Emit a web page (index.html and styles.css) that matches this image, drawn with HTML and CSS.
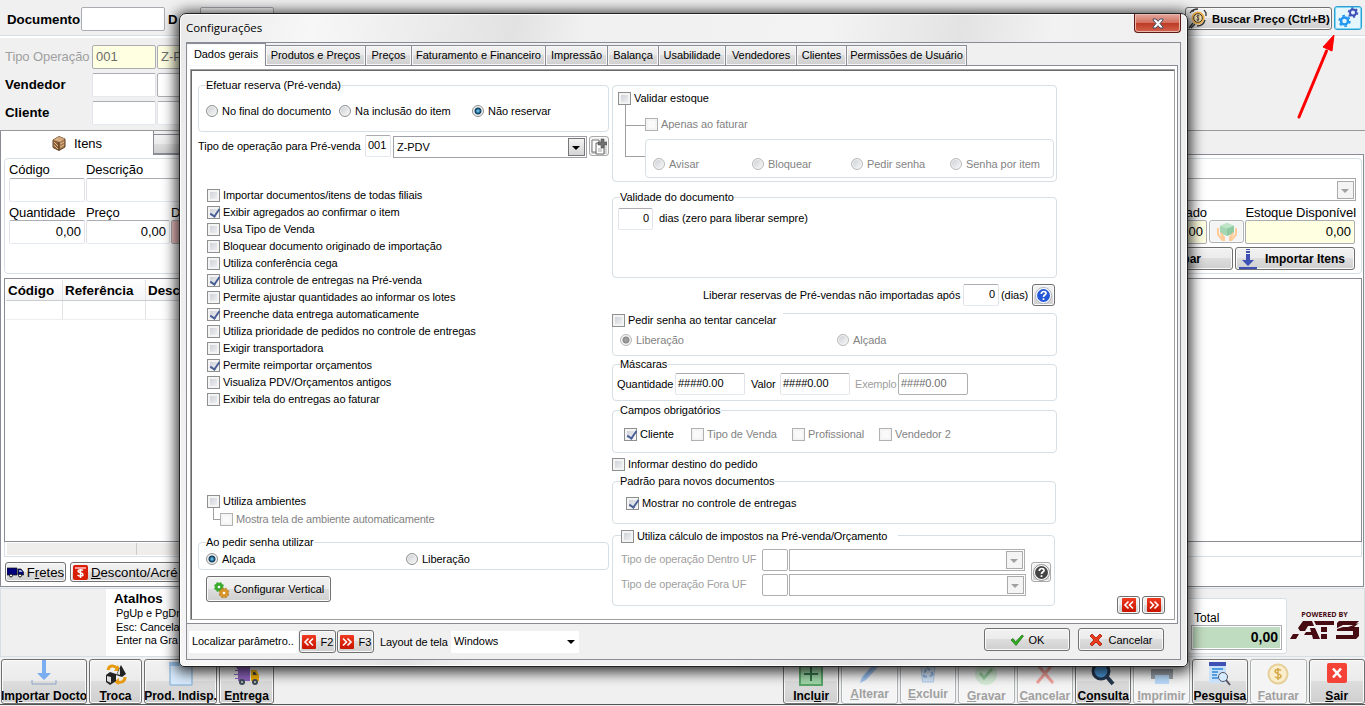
FILE: index.html
```
<!DOCTYPE html>
<html lang="pt-BR">
<head>
    <meta charset="UTF-8">
    <meta name="viewport" content="width=device-width, initial-scale=1.0">
    <title>Configurações</title>
    <link rel="stylesheet" href="styles.css">
</head>
<body>
    <header class="topbar">
        <label class="doc">Documento</label>
        <div class="box doc-num"></div>
        <label class="doc-date">D</label>
        <div class="box doc-day"></div>
        <button class="btn buscar">
            <svg width="21" height="21" viewBox="0 0 21 21" fill="none"><circle cx="11" cy="10" r="6.5" fill="#f3b54a"/><circle cx="11" cy="10" r="4.3" fill="#fbe3b0" stroke="#333"/><path d="M4 3h3M3 5c2-3 5-4 8-4M17 2l2 3v3M18 12c-1 4-4 6-8 6M6 15l-4 5M8 16l-4 4" stroke="#333" stroke-width="1.3"/><path d="M12.5 8c-2-1.500-3.500.5-1.500 1.700s.5 3.500-1.500 2M11 7v6" stroke="#333" stroke-width=".9"/></svg>
            <b>Buscar Preço (Ctrl+B)</b>
        </button>
        <button class="btn gear-btn">
            <svg width="22" height="22" viewBox="0 0 22 22" fill="none"><circle cx="7.500" cy="14" r="5.300" stroke="#2196f3" stroke-width="1.800" stroke-dasharray="2.600 2.950"/><circle cx="7.500" cy="14" r="3.500" stroke="#2196f3" stroke-width="2.500"/><circle cx="16" cy="5.500" r="4.500" stroke="#3f51b5" stroke-width="1.500" stroke-dasharray="2.200 2.500"/><circle cx="16" cy="5.500" r="3" stroke="#3f51b5" stroke-width="2"/></svg>
        </button>
    </header>

    <section class="head">
        <div class="head-row"><label class="off">Tipo Operação</label><div class="box yellow">001</div><div class="box yellow wide">Z-P</div></div>
        <div class="head-row"><label>Vendedor</label><div class="box soft"></div><div class="box wide"></div></div>
        <div class="head-row"><label>Cliente</label><div class="box soft"></div><div class="box soft wide"></div></div>
    </section>

    <div class="main-tabs">
        <div class="main-tab on">
            <svg width="14" height="15" viewBox="0 0 14 15"><path d="M1 4l6-3.500 6 2.500v8l-6 3.500-6-3z" fill="#a87c4f" stroke="#5e4126"/><path d="M1 4l6 2 6-3-6-2.500z" fill="#d2a87f"/><path d="M7 6v8l-6-2.500V4z" fill="#8a6038"/><path d="M2 6l4 4M2 9l4 4M8 8l4-2M8 11l4-2M4 3l5 2" stroke="#e0bb92"/><path d="M7 6v8" stroke="#4c331d"/></svg>
            Itens
        </div>
        <div class="main-tab next"></div>
    </div>

    <main class="sheet">
        <div class="entry">
            <div class="entry-labels"><span class="w77">Código</span><span>Descrição</span></div>
            <div class="entry-line"><div class="box soft w76"></div><div class="box soft grow"></div><div class="combo far"><i class="drop"></i></div></div>
            <div class="entry-labels second"><span class="w77">Quantidade</span><span class="w85">Preço</span><span class="w60">D</span><span class="right-lbl">ado</span><span class="avail">Estoque Disponível</span></div>
            <div class="entry-line">
                <div class="box soft w76">0,00</div><div class="box soft w84">0,00</div><div class="box pink"></div>
                <div class="box yellow reserved">0,00</div>
                <button class="btn faded hands"><svg width="22" height="20" viewBox="0 0 22 20"><path d="M11 1l7 3v7l-7 3-7-3V4z" fill="#a5d6b3"/><path d="M4 4l7 2.500 7-2.500-7-3z" fill="#bfe5c8"/><path d="M11 6.500V14l7-3V4z" fill="#8fcaa0"/><path d="M1 6v7l5 6h3v-4l-4-5-1 1 2 4-3-3V6zM21 6v7l-5 6h-3v-4l4-5 1 1-2 4 3-3V6z" fill="#ffcc99"/></svg></button>
                <div class="box yellow avail-box">0,00</div>
            </div>
            <div class="entry-buttons"><button class="btn limpar"><b>par</b></button><button class="btn importar"><svg width="18" height="20" viewBox="0 0 18 20"><path d="M7 0h4v1H7zM7 2h4v2H7zM7 5h4v6h4l-6 6-6-6h4zM0 18h18v2H0z" fill="#3f51b5"/></svg><b>Importar Itens</b></button></div>
        </div>
        <div class="grid">
            <div class="grid-head"><b class="c1">Código</b><b class="c2">Referência</b><b>Desc</b></div>
            <div class="grid-row"><i class="c1"></i><i class="c2"></i></div>
        </div>
        <div class="grid-foot"><i></i></div>
        <div class="sheet-buttons">
            <button class="btn fretes"><svg width="17" height="12" viewBox="0 0 17 12"><path d="M0 2h10v7H0zM11 3h3l2.500 3v3H11z" fill="#00007f" stroke="#111" stroke-width=".7"/><path d="M12 4h2l1.500 2H12z" fill="#9ad"/><circle cx="4" cy="9.500" r="1.500" fill="#fff" stroke="#111"/><circle cx="13" cy="9.500" r="1.500" fill="#fff" stroke="#111"/></svg><span>F<u>r</u>etes</span></button>
            <button class="btn desconto"><svg width="15" height="15" viewBox="0 0 15 15"><rect width="15" height="15" rx="2" fill="#d81e05"/><path d="M2 2h11v2H2z" fill="#f99"/><path d="M10 5.500c-1-1-5-1-5 .7s5 1.300 5 3.300-4 2-5.500.5M7.500 4v9" stroke="#fff" stroke-width="1.500" fill="none"/></svg><span><u>D</u>esconto/Acré</span></button>
        </div>
    </main>

    <section class="status">
        <div class="status-blank"></div>
        <div class="atalhos">
            <b>Atalhos</b>
            <p>PgUp e PgDn</p>
            <p>Esc: Cancela</p>
            <p>Enter na Gra</p>
        </div>
        <div class="total">
            <span>Total</span>
            <div class="total-value">0,00</div>
        </div>
        <div class="brand">
            <small>POWERED BY</small>
            <svg width="69" height="18" viewBox="0 0 69 18" fill="#470b12"><path d="M0 18l3-5h6l-3 5zM8 7l5-7h9l2 5h-6l-3 5h-5zM20 7h5l5 11h-7l-1-4h-8l2-3h5zM24 0h20v4H26zM31 6h6v5h-6zM31 13h6v5h-6zM49 0h20l-4 4H53L47 7V2zM47 8l6-2h5l11-4-5 4h5v9l-3 3H46v-4h17v-4H47z"/></svg>
        </div>
    </section>

    <nav class="toolbar">
        <button class="btn tool t1"><svg width="26" height="26" viewBox="0 0 26 26"><path d="M11 0h4v13h5l-7 7-7-7h5z" fill="#7aaef0"/><path d="M1 20v4h24v-4" stroke="#8ea4c4" fill="none"/></svg><b>Im<u>p</u>ortar Docto</b></button>
        <button class="btn tool t2"><svg width="22" height="22" viewBox="0 0 22 22"><path d="M3 6c1-5 6-5 9-2M20 13c0 5-4 6-8 5" stroke="#e89b12" stroke-width="3" fill="none"/><path d="M9 7h6l-2-6zM14 14v7l-5-3z" fill="#e89b12"/><path d="M1 11l4-3 6 2v7l-6 4-4-3zM16 1l5 9-4 3-6-2z" fill="#222"/><path d="M2 12l4 1v6l-4-2zM15 4v7l-3-1z" fill="#ddd"/></svg><b><u>T</u>roca</b></button>
        <button class="btn tool t3"><svg width="26" height="24" viewBox="0 0 26 24"><path d="M2 1h22v22H2z" fill="#d7eafc" stroke="#7ba9d6"/><path d="M1 0h24v4H1z" fill="#9cc4ea"/></svg><b>Prod. Indisp.</b></button>
        <button class="btn tool t4"><svg width="26" height="22" viewBox="0 0 26 22"><path d="M2 3h14v14H4v-2H1v-1h3v-3H0v-1h4V7H1V6h3z" fill="#8e63bd"/><path d="M17 6h5l3 5v6h-8z" fill="#f5b100"/><path d="M19 8h2l2 3h-4z" fill="#444"/><circle cx="8" cy="18" r="3" fill="#3d4a55"/><circle cx="21" cy="18" r="3" fill="#3d4a55"/><circle cx="8" cy="18" r="1" fill="#ccc"/><circle cx="21" cy="18" r="1" fill="#ccc"/></svg><b>E<u>n</u>trega</b></button>

        <button class="btn tool t5"><svg width="24" height="24" viewBox="0 0 24 24"><rect x="1" y="1" width="22" height="22" fill="#9fd6a8" stroke="#5aa469" stroke-width="2"/><path d="M5 12h14M12 5v14" stroke="#33764a" stroke-width="2"/></svg><b>Incl<u>u</u>ir</b></button>
        <button class="btn tool faded up"><svg width="24" height="24" viewBox="0 0 24 24"><path d="M2 23l2-6L17 2l4 4L8 20z" fill="#9fc4ef"/><path d="M6 18L17 5" stroke="#7fade3"/></svg><b><u>A</u>lterar</b></button>
        <button class="btn tool faded up"><svg width="20" height="24" viewBox="0 0 22 24"><path d="M3 3h16l-2 20H5z" fill="#d5e6f8" stroke="#a8c8ec"/><path d="M7 13l2-4M10 7l3 3M15 12l1 3-3 2M10 17H7l-1-2" stroke="#8ab0e0" stroke-width="2" fill="none"/></svg><b><u>E</u>xcluir</b></button>
        <button class="btn tool faded"><svg width="24" height="24" viewBox="0 0 24 24"><circle cx="12" cy="12" r="11" fill="#d5ecd6"/><path d="M6 11l4 5 8-9" stroke="#97cda0" stroke-width="3" fill="none"/></svg><b><u>G</u>ravar</b></button>
        <button class="btn tool faded"><svg width="22" height="24" viewBox="0 0 22 24"><path d="M3 2l16 19M19 2L3 21" stroke="#f4a39c" stroke-width="3"/></svg><b><u>C</u>ancelar</b></button>
        <button class="btn tool"><svg width="26" height="26" viewBox="0 0 26 26"><circle cx="11" cy="11" r="8" fill="#4a98db" stroke="#26384f" stroke-width="3"/><path d="M17 17l6 7" stroke="#26384f" stroke-width="4"/></svg><b>C<u>o</u>nsulta</b></button>
        <button class="btn tool faded"><svg width="24" height="24" viewBox="0 0 24 24"><path d="M1 7h22v10H1z" fill="#9ba3ab"/><path d="M5 13h14v9H5z" fill="#b9dafa"/></svg><b><u>I</u>mprimir</b></button>
        <button class="btn tool"><svg width="24" height="24" viewBox="0 0 24 24"><path d="M1 1h17v20H1z" fill="#c9e2fa"/><path d="M1 0h17v4H1z" fill="#3f51b5"/><path d="M4 7h11M4 10h6M4 13h5M4 16h6" stroke="#2d88d8" stroke-width="1.500"/><circle cx="15" cy="15" r="4.500" fill="#d8ecff" stroke="#556"/><path d="M18 18l4 5" stroke="#556" stroke-width="2"/></svg><b>Pes<u>q</u>uisa</b></button>
        <button class="btn tool faded"><svg width="22" height="24" viewBox="0 0 22 24"><circle cx="11" cy="12" r="9.500" fill="#faedcc" stroke="#e6cf9a" stroke-width="2"/><path d="M14 8.500c-2-1.500-6-1.200-6 1s6 2 6 4.500-4 2.500-6 .7M11 6v12" stroke="#d5a949" stroke-width="1.500" fill="none"/></svg><b><u>F</u>aturar</b></button>
        <button class="btn tool"><svg width="20" height="24" viewBox="0 0 20 24"><rect y="1" width="20" height="20" rx="2" fill="#f44336"/><path d="M6 6.500l8 9M14 6.500l-8 9" stroke="#fff" stroke-width="2.500"/></svg><b><u>S</u>air</b></button>
    </nav>
    <div class="statusline"></div>

    <svg class="arrow" width="44" height="86" viewBox="0 0 44 86"><path d="M5 83L32.500 17" stroke="#f00" stroke-width="3" stroke-linecap="round"/><path d="M40 1L29 13l9 4z" fill="#f00" stroke="#f00"/></svg>

    <div class="dialog">
        <div class="title"><span>Configurações</span><button class="close"><svg width="12" height="11" viewBox="0 0 12 11"><path d="M1 1h3l2 2.300L8 1h3v1L8 5.500 11 9v1H8L6 7.700 4 10H1V9l3-3.500L1 2z" fill="#fff" stroke="#444b66"/></svg></button></div>
        <div class="client">
            <div class="tabs">
                <div class="tab on">Dados gerais</div>
                <div class="tab w100">Produtos e Preços</div>
                <div class="tab w46">Preços</div>
                <div class="tab w134">Faturamento e Financeiro</div>
                <div class="tab w62">Impressão</div>
                <div class="tab w51">Balança</div>
                <div class="tab w67">Usabilidade</div>
                <div class="tab w71">Vendedores</div>
                <div class="tab w50">Clientes</div>
                <div class="tab w121">Permissões de Usuário</div>
            </div>
            <div class="page">
                <div class="panel">
                    <div class="col-left">
                        <div class="group reserva">
                            <div class="legend">Efetuar reserva (Pré-venda)</div>
                            <div class="line">
                                <label class="opt w133"><i class="radio"></i>No final do documento</label>
                                <label class="opt w133"><i class="radio"></i>Na inclusão do item</label>
                                <label class="opt"><i class="radio sel"></i>Não reservar</label>
                            </div>
                        </div>
                        <div class="tipo-row">
                            <span class="tipo-lbl">Tipo de operação para Pré-venda</span>
                            <div class="field f26">001</div>
                            <div class="combo f194">Z-PDV<i class="drop"></i></div>
                            <button class="btn copy"><svg width="16" height="17" viewBox="0 0 16 17"><path d="M1 2h7v12H1z" fill="#fff" stroke="#777"/><path d="M5 5h8v11H5z" fill="#fff" stroke="#666"/><path d="M7 11h4M7 13h4" stroke="#aaa"/><path d="M10 1h3v3h3v3h-3v3h-3V7H7V4h3z" fill="#707070" stroke="#444" stroke-width=".5"/></svg></button>
                        </div>
                        <div class="checks">
                            <label class="opt"><i class="check"></i>Importar documentos/itens de todas filiais</label>
                            <label class="opt"><i class="check sel"></i>Exibir agregados ao confirmar o item</label>
                            <label class="opt"><i class="check"></i>Usa Tipo de Venda</label>
                            <label class="opt"><i class="check"></i>Bloquear documento originado de importação</label>
                            <label class="opt"><i class="check"></i>Utiliza conferência cega</label>
                            <label class="opt"><i class="check sel"></i>Utiliza controle de entregas na Pré-venda</label>
                            <label class="opt"><i class="check"></i>Permite ajustar quantidades ao informar os lotes</label>
                            <label class="opt"><i class="check sel"></i>Preenche data entrega automaticamente</label>
                            <label class="opt"><i class="check"></i>Utiliza prioridade de pedidos no controle de entregas</label>
                            <label class="opt"><i class="check"></i>Exigir transportadora</label>
                            <label class="opt"><i class="check sel"></i>Permite reimportar orçamentos</label>
                            <label class="opt"><i class="check"></i>Visualiza PDV/Orçamentos antigos</label>
                            <label class="opt"><i class="check"></i>Exibir tela do entregas ao faturar</label>
                        </div>
                        <div class="ambientes">
                            <label class="opt"><i class="check"></i>Utiliza ambientes</label>
                            <div class="line"><i class="elbow"></i><label class="opt dis"><i class="check"></i>Mostra tela de ambiente automaticamente</label></div>
                        </div>
                        <div class="group senha">
                            <div class="legend">Ao pedir senha utilizar</div>
                            <div class="line">
                                <label class="opt w200"><i class="radio sel"></i>Alçada</label>
                                <label class="opt"><i class="radio"></i>Liberação</label>
                            </div>
                        </div>
                        <button class="btn vertical"><svg width="17" height="17" viewBox="0 0 17 17"><path d="M4 1l2 1 2-1 1 2 2 1-1 2 1 2-2 1-1 2-2-1-2 1-1-2-2-1 1-2-1-2 2-1z" fill="#3cab2f"/><circle cx="6" cy="6" r="1.300" fill="#fff"/><path d="M9 7l2 1 2-1 1 2 2 1-1 2 1 2-2 1-1 2-2-1-2 1-1-2-2-1 1-2-1-2 2-1z" fill="#d9962a" stroke="#a8690f" stroke-width=".5"/><circle cx="11" cy="12" r="1.300" fill="#fff"/></svg>Configurar Vertical</button>
                    </div>

                    <div class="col-right">
                        <div class="group estoque">
                            <label class="opt"><i class="check"></i>Validar estoque</label>
                            <div class="tree">
                                <div class="twigs"><i></i><i></i></div>
                                <div class="branch">
                                    <label class="opt dis"><i class="check"></i>Apenas ao faturar</label>
                                    <div class="group acoes">
                                        <label class="opt dis w99"><i class="radio"></i>Avisar</label>
                                        <label class="opt dis w99"><i class="radio"></i>Bloquear</label>
                                        <label class="opt dis w99"><i class="radio"></i>Pedir senha</label>
                                        <label class="opt dis"><i class="radio"></i>Senha por item</label>
                                    </div>
                                </div>
                            </div>
                        </div>
                        <div class="group validade">
                            <div class="legend">Validade do documento</div>
                            <div class="line"><div class="field f35 num">0</div><span class="dias">dias (zero para liberar sempre)</span></div>
                        </div>
                        <div class="line liberar">
                            <span>Liberar reservas de Pré-vendas não importadas após</span>
                            <div class="field f36 num">0</div>
                            <span class="lib-dias">(dias)</span>
                            <button class="btn help"><svg width="17" height="17" viewBox="0 0 17 17"><circle cx="8.500" cy="8.500" r="8" fill="#fff" stroke="#9aa3b8" stroke-width=".8"/><circle cx="8.500" cy="8.500" r="6.500" fill="#2458d8"/><path d="M6.300 7c0-3.500 5-3 4.700-.5-.3 1.700-2.500 1.500-2.500 3.500M8.500 11.300v1.700" stroke="#fff" stroke-width="1.700" fill="none"/></svg></button>
                        </div>
                        <div class="group cancelar">
                            <label class="opt capt"><i class="check"></i>Pedir senha ao tentar cancelar</label>
                            <div class="line">
                                <label class="opt dis w217"><i class="radio sel"></i>Liberação</label>
                                <label class="opt dis"><i class="radio"></i>Alçada</label>
                            </div>
                        </div>
                        <div class="group mascaras">
                            <div class="legend">Máscaras</div>
                            <div class="line">
                                <span class="m1">Quantidade</span><div class="field f70">####0.00</div>
                                <span class="m2">Valor</span><div class="field f70">####0.00</div>
                                <span class="m3">Exemplo</span><div class="field f70 off">####0.00</div>
                            </div>
                        </div>
                        <div class="group campos">
                            <div class="legend">Campos obrigatórios</div>
                            <div class="line">
                                <label class="opt w67"><i class="check sel"></i>Cliente</label>
                                <label class="opt dis w101"><i class="check"></i>Tipo de Venda</label>
                                <label class="opt dis w87"><i class="check"></i>Profissional</label>
                                <label class="opt dis"><i class="check"></i>Vendedor 2</label>
                            </div>
                        </div>
                        <label class="opt informar"><i class="check"></i>Informar destino do pedido</label>
                        <div class="group padrao">
                            <div class="legend">Padrão para novos documentos</div>
                            <label class="opt"><i class="check sel"></i>Mostrar no controle de entregas</label>
                        </div>
                        <div class="group impostos">
                            <label class="opt capt"><i class="check"></i>Utiliza cálculo de impostos na Pré-venda/Orçamento</label>
                            <div class="line">
                                <div class="ufs">
                                    <div class="line uf"><span>Tipo de operação Dentro UF</span><div class="field off f26"></div><div class="combo off"><i class="drop"></i></div></div>
                                    <div class="line uf"><span>Tipo de operação Fora UF</span><div class="field off f26"></div><div class="combo off fora"><i class="drop"></i></div></div>
                                </div>
                                <button class="btn help gray"><svg width="17" height="17" viewBox="0 0 17 17"><circle cx="8.500" cy="8.500" r="8" fill="#fff" stroke="#777" stroke-width=".8"/><circle cx="8.500" cy="8.500" r="6.500" fill="#444"/><path d="M6.300 7c0-3.500 5-3 4.700-.5-.3 1.700-2.500 1.500-2.500 3.500M8.500 11.300v1.700" stroke="#fff" stroke-width="1.700" fill="none"/></svg></button>
                            </div>
                        </div>
                    </div>

                    <div class="pager">
                        <button class="btn"><svg class="red" width="14" height="14" viewBox="0 0 14 14"><path d="M6.500 3.500L3 7l3.500 3.500M11 3.500L7.500 7l3.500 3.500"/></svg></button>
                        <button class="btn"><svg class="red" width="14" height="14" viewBox="0 0 14 14"><path d="M3 3.500L6.500 7 3 10.500M7.500 3.500L11 7l-3.500 3.500"/></svg></button>
                    </div>
                </div>
            </div>
            <footer class="foot">
                <div class="plain find">Localizar parâmetro..</div>
                <button class="btn fkey"><svg class="red" width="14" height="14" viewBox="0 0 14 14"><path d="M6.500 3.500L3 7l3.500 3.500M11 3.500L7.500 7l3.500 3.500"/></svg>F2</button>
                <button class="btn fkey"><svg class="red" width="14" height="14" viewBox="0 0 14 14"><path d="M3 3.500L6.500 7 3 10.500M7.500 3.500L11 7l-3.500 3.500"/></svg>F3</button>
                <span class="layout-lbl">Layout de tela</span>
                <div class="plain layout-sel">Windows<i></i></div>
                <button class="btn action ok"><svg width="14" height="12" viewBox="0 0 14 12"><path d="M1 6l2-1.500L5.500 8 12 1l1.500 1L6 11.500z" fill="#2fae20" stroke="#1a6c12" stroke-width=".7"/></svg>OK</button>
                <button class="btn action"><svg width="14" height="14" viewBox="0 0 14 14"><path d="M1 3l2-2 4 4 4-4 2 2-4 4 4 4-2 2-4-4-4 4-2-2 4-4z" fill="#f23a1c" stroke="#a3170a" stroke-width=".8"/></svg>Cancelar</button>
            </footer>
        </div>
    </div>
</body>
</html>
```

FILE: styles.css
```
* {
    box-sizing: border-box;
}
body {
    position: relative;
    width: 1365px;
    height: 706px;
    margin: 0;
    overflow: hidden;
    background-color: #f0f0f0;
    color: #000;
    font-family: "Liberation Sans", Arial, sans-serif;
    font-size: 13px;
    white-space: nowrap;
}
p {
    margin: 0;
}
i {
    font-style: normal;
    flex: none;
}
svg {
    flex: none;
}
.line {
    display: flex;
}

/* shared controls */
.btn {
    display: flex;
    align-items: center;
    justify-content: center;
    flex: none;
    padding: 0;
    border: 1px solid #707070;
    border-radius: 3px;
    background: linear-gradient(#f2f2f2, #ebebeb 49%, #dddddd 50%, #cfcfcf);
    box-shadow: inset 0 0 0 1px #fafafa;
    color: #000;
    font-family: inherit;
    font-size: 11px;
    white-space: nowrap;
}
.btn.faded {
    border-color: #adb2b5;
    background: #f4f4f4;
    color: #a0a0a0;
}
.box {
    flex: none;
    height: 24px;
    padding: 0 3px;
    border: 1px solid #abadb3;
    border-radius: 2px;
    background-color: #fff;
    line-height: 22px;
}
.box.soft {
    border-color: #abadb3 #e2e3ea #e3e9ef #e2e3ea;
}
.box.yellow {
    background-color: #ffffe1;
}
.combo {
    display: flex;
    align-items: center;
    flex: none;
    border: 1px solid #a0a0a8;
    background-color: #fff;
    padding: 0 1px 0 3px;
}
.drop {
    width: 17px;
    height: 18px;
    margin-left: auto;
    border: 1px solid #777;
    background: linear-gradient(#f4f4f4, #d4d4d4);
}
.drop::after {
    content: "";
    display: block;
    width: 0;
    margin: 7px 0 0 3px;
    border: 4px solid transparent;
    border-top: 4px solid #000;
    border-bottom: 0;
}

/* window behind the dialog */
.topbar {
    display: flex;
    height: 36px;
    padding-top: 7px;
    border-bottom: 1px solid #d5dfe5;
    font-size: 13.3px;
    font-weight: bold;
}
.doc {
    width: 81px;
    padding-left: 7px;
    line-height: 25px;
}
.doc-num {
    width: 84px;
}
.doc-date {
    width: 35px;
    padding-left: 3px;
    line-height: 25px;
}
.doc-day {
    width: 74px;
}
.buscar {
    justify-content: flex-start;
    width: 147px;
    height: 23px;
    margin-left: 911px;
    gap: 4px;
    padding-left: 1px;
    font-size: 11.3px;
}
.gear-btn {
    width: 28px;
    height: 24px;
    margin: -1px 0 0 2px;
    border: 1px solid #2c9fd0;
    background-color: #e5f6fd;
    background-image: none;
    box-shadow: inset 0 0 0 1px #7fd6f5;
}
.head {
    height: 95px;
    padding-top: 7px;
    border-top: 2px solid #fff;
    border-bottom: 1px solid #999;
}
.head-row {
    display: flex;
    height: 28px;
    gap: 1px;
    color: #6d6d6d;
}
.head-row label {
    width: 91px;
    padding-left: 5px;
    color: #000;
    font-size: 13.3px;
    font-weight: bold;
    line-height: 24px;
}
.head-row .off {
    color: #a0a0a0;
    font-size: 13px;
    font-weight: normal;
    letter-spacing: -.08px;
}
.head-row .box {
    width: 64px;
}
.head-row .wide {
    width: 300px;
}
.main-tabs {
    display: flex;
    height: 23px;
}
.main-tab.on {
    display: flex;
    align-items: center;
    justify-content: center;
    width: 154px;
    height: 24px;
    gap: 8px;
    border: 1px solid #898c95;
    border-width: 0 1px 0 1px;
    background-color: #fff;
    position: relative;
}
.main-tab.next {
    width: 120px;
    margin-top: 3px;
    border: 1px solid #898c95;
    border-left: 0;
    background: linear-gradient(#f2f2f2, #ebebeb 49%, #ddd 50%, #cfcfcf);
}
.sheet {
    width: 1364px;
    height: 433px;
    padding: 3px 1px 0 3px;
    border: 1px solid #898c95;
    background-color: #fff;
}
.entry {
    height: 116px;
    padding: 3px 5px 0 4px;
    border: 1px solid #d5dfe5;
    border-radius: 4px;
}
.entry-labels {
    display: flex;
    height: 16px;
    line-height: 15px;
    letter-spacing: -.08px;
}
.entry-labels.second {
    margin-top: 2px;
    line-height: 17px;
}
.entry-line {
    display: flex;
    gap: 1px;
    height: 24px;
    text-align: right;
}
.w60 { width: 60px; }
.w76 { width: 76px; }
.w77 { width: 77px; }
.w84 { width: 84px; }
.w85 { width: 85px; }
.grow {
    width: 900px;
}
.combo.far {
    width: 200px;
    height: 23px;
    margin-left: 169px;
    border-color: #a8a8a8;
}
.far .drop,
.combo.off .drop {
    border-color: #aaa;
    background: #f4f4f4;
}
.far .drop::after,
.combo.off .drop::after {
    border-top-color: #a0a0a0;
}
.box.pink {
    width: 84px;
    background-color: #f4c4c4;
}
.right-lbl {
    margin-left: 909px;
    width: 67px;
    text-align: right;
}
.avail {
    margin-left: auto;
}
.reserved {
    width: 80px;
    margin-left: 871px;
}
.hands {
    width: 35px;
    height: 23px;
    margin-left: 1px;
}
.avail-box {
    width: 110px;
}
.entry-buttons {
    display: flex;
    justify-content: flex-end;
    gap: 2px;
    height: 23px;
    margin-top: 3px;
    padding-right: 1px;
}
.limpar {
    justify-content: flex-end;
    width: 90px;
    padding-right: 31px;
}
.importar {
    justify-content: flex-start;
    width: 120px;
    gap: 8px;
    padding-left: 3px;
}
.entry-buttons b {
    font-size: 12px;
}
.grid {
    height: 264px;
    margin-top: 4px;
    padding: 1px;
    border: 1px solid #898c95;
}
.grid-head {
    display: flex;
    width: 900px;
    height: 21px;
    border-bottom: 1px solid #ccc;
    background: linear-gradient(#fff, #f3f4f6);
    font-size: 13.4px;
    line-height: 21px;
}
.grid-head b,
.grid-row i {
    padding-left: 2px;
    border-right: 1px solid #e2e2e2;
}
.grid-row {
    display: flex;
    width: 900px;
    height: 19px;
    border-bottom: 1px solid #eee;
}
.c1 {
    width: 57px;
}
.c2 {
    width: 83px;
}
.grid-foot {
    height: 15px;
    padding: 1px 2px;
    border: 1px solid #d5dfe5;
    border-top: 0;
}
.grid-foot i {
    display: block;
    width: 130px;
    height: 12px;
    border-right: 1px solid #ccc;
    background-color: #f0eeec;
    box-shadow: 130px 0 #f0eeec;
}
.sheet-buttons {
    display: flex;
    gap: 4px;
    margin: 5px 0 0 1px;
}
.sheet-buttons .btn {
    height: 20px;
    gap: 3px;
    font-size: 13.2px;
}
.fretes {
    width: 61px;
}
.desconto {
    justify-content: flex-start;
    width: 150px;
    padding-left: 2px;
}
.status {
    display: flex;
    height: 69px;
    margin-top: 1px;
    border: 1px solid #d5dfe5;
}
.status-blank {
    width: 105px;
}
.atalhos {
    width: 600px;
    padding: 2px 0 0 10px;
    background-color: #fff;
    font-size: 11px;
}
.atalhos b {
    display: block;
    margin-left: -2px;
    font-size: 13.3px;
    line-height: 16px;
}
.atalhos p {
    line-height: 13.5px;
    letter-spacing: -.1px;
}
.total {
    width: 180px;
    height: 56px;
    margin: 9px 0 0 401px;
    padding: 12px 5px 0 86px;
    border: 1px solid #d5dfe5;
    border-radius: 3px;
    background-color: #fff;
    font-size: 12px;
}
.total-value {
    height: 25px;
    margin: 0 -1px 0 -3px;
    padding-right: 3px;
    border: 1px solid #abadb3;
    box-shadow: inset 0 0 0 1px #fff;
    background-color: #c0dcc0;
    font-size: 14px;
    font-weight: bold;
    line-height: 22px;
    text-align: right;
}
.brand {
    padding: 21px 0 0 3px;
    color: #470b12;
    text-align: center;
}
.brand small {
    display: block;
    margin-bottom: 3px;
    font: bold 7.2px/8px "Open Sans", sans-serif;
}
.brand svg {
    display: block;
}
.toolbar {
    display: flex;
    gap: 2px;
    padding: 2px 1px 0;
}
.tool {
    flex-direction: column;
    justify-content: flex-end;
    width: 56.4px;
    height: 45px;
    gap: 3px;
    overflow: hidden;
}
.tool b {
    font-size: 12px;
    line-height: 14px;
}
.tool.up {
    padding-bottom: 2px;
}
.t1 { width: 86px; }
.t2 { width: 53px; }
.t3 { width: 73px; }
.t4 { width: 55px; }
.t5 { margin-left: 507px; }
.statusline {
    height: 2px;
    border-top: 1px solid #555;
}
.arrow {
    position: absolute;
    left: 1294px;
    top: 34px;
}

/* dialog */
.dialog {
    position: absolute;
    left: 179px;
    top: 13px;
    width: 1009px;
    height: 654px;
    padding: 0 6px;
    border: 1px solid #222;
    border-radius: 7px 7px 5px 5px;
    background: linear-gradient(100deg, #e9e9e9, #f7f7f7 12%, #e2e2e2 30%, #f0f0f0 36%, #f3f3f3 58%, #e3e3e3 70%, #f2f2f2 78%, #ececec);
    box-shadow: inset 0 0 0 1px #fff, 0 2px 14px 3px rgba(0, 0, 0, .8);
    font-size: 11px;
    letter-spacing: -.05px;
}
.title {
    display: flex;
    justify-content: space-between;
    height: 28px;
    font: 11.5px/28px "Open Sans", sans-serif;
}
.close {
    display: flex;
    align-items: center;
    justify-content: center;
    width: 47px;
    height: 19px;
    padding: 0;
    border: 1px solid #5c1b14;
    border-top: 0;
    border-radius: 0 0 4px 4px;
    background: linear-gradient(#e6a99f, #d2705f 48%, #bb3a23 50%, #d4634d);
    box-shadow: inset 0 0 0 1px #eab5ac;
}
.client {
    width: 995px;
    height: 618px;
    border: 1px solid #898c95;
    background-color: #f0f0f0;
}
.tabs {
    display: flex;
    align-items: flex-end;
    height: 22px;
}
.tab {
    flex: none;
    height: 20px;
    border: 1px solid #898c95;
    border-left: 0;
    border-bottom: 0;
    background: linear-gradient(#f2f2f2, #ebebeb 49%, #ddd 50%, #cfcfcf);
    box-shadow: inset 0 0 0 1px #f8f8f8;
    line-height: 19px;
    text-align: center;
}
.tab.on {
    position: relative;
    width: 79px;
    height: 23px;
    margin-bottom: -1px;
    background: #fff;
    line-height: 20px;
}
.w46 { width: 46px; }
.w50 { width: 50px; }
.w51 { width: 51px; }
.w62 { width: 62px; }
.w67 { width: 67px; }
.w71 { width: 71px; }
.w100 { width: 100px; }
.w121 { width: 121px; }
.w134 { width: 134px; }
.tab.w121 {
    width: 120px;
}
.page {
    width: 991px;
    height: 559px;
    padding: 3px 2px 3px 3px;
    border: 1px solid #898c95;
    border-left: 0;
    background-color: #fff;
}
.panel {
    position: relative;
    display: flex;
    gap: 3px;
    height: 551px;
    padding: 15px 0 0 7px;
    border: 1px solid #a0a0a0;
    box-shadow: inset 1px 1px 0 #696969;
}
.col-left {
    width: 411px;
}
.col-right {
    width: 445px;
}
.group {
    border: 1px solid #d5dfe5;
    border-radius: 4px;
}
.legend {
    width: max-content;
    height: 14px;
    margin: -8px 0 0 7px;
    background-color: #fff;
    line-height: 15px;
}
.opt {
    display: flex;
    align-items: center;
    flex: none;
    height: 14px;
    gap: 3px;
}
.opt.dis,
.uf span,
.m3 {
    color: #838383;
}
.check {
    width: 13px;
    height: 13px;
    border: 1px solid #8e8f8f;
    background: linear-gradient(135deg, #c6cbd3, #f6f6f6);
    box-shadow: inset 0 0 0 2px #f4f4f4;
    position: relative;
}
.dis .check {
    border-color: #b1b1b1;
    background: #fafafa;
}
.check.sel::after {
    content: "";
    position: absolute;
    left: 4px;
    top: 1px;
    width: 4px;
    height: 8px;
    border: solid #4a5f97;
    border-width: 0 2px 2px 0;
    transform: translateY(-1px) rotate(35deg);
}
.radio {
    width: 12px;
    height: 12px;
    margin-right: 1px;
    border: 1px solid #8e8f8f;
    border-radius: 50%;
    background: linear-gradient(135deg, #c9cdd2, #fafafa);
    box-shadow: inset 0 0 0 1px #f4f4f4;
}
.radio.sel {
    background: radial-gradient(circle at 5px 5px, #8fd9f5 0, #1f6d9c 2px, #12344f 3px, #e8ecef 4px);
}
.dis .radio {
    border-color: #b9b9b9;
}
.dis .radio.sel {
    background: radial-gradient(circle at 5px 5px, #aaa 0, #888 3px, #eee 4px);
}
.field {
    flex: none;
    height: 22px;
    padding: 0 2px;
    border: 1px solid;
    border-color: #abadb3 #e2e3ea #e3e9ef #e2e3ea;
    border-radius: 2px;
    line-height: 19px;
}
.field.off {
    border-color: #afafaf;
    color: #6d6d6d;
}
.num {
    padding-right: 3px;
    text-align: right;
}
.f26 { width: 26px; }
.f35 { width: 35px; }
.f36 { width: 36px; }
.f70 { width: 70px; }

/* left column */
.reserva {
    height: 47px;
}
.reserva .line {
    margin: 12px 0 0 7px;
}
.w133 { width: 133px; }
.tipo-row {
    display: flex;
    margin-top: 3px;
}
.tipo-lbl {
    width: 167px;
    line-height: 22px;
}
.f194 {
    width: 194px;
    height: 22px;
    margin: 1px 2px 0;
}
.copy {
    width: 20px;
    height: 20px;
    margin-top: 1px;
    border-color: #aaa;
}
.checks {
    margin: 30px 0 0 9px;
    letter-spacing: -.09px;
}
.checks .opt {
    margin-bottom: 3px;
}
.ambientes {
    margin: 88px 0 0 9px;
}
.ambientes .line {
    margin-top: 4px;
    letter-spacing: -.18px;
}
.elbow {
    width: 7px;
    height: 12px;
    margin: -4px 0 0 6px;
    border: solid #a0a0a0;
    border-width: 0 0 1px 1px;
}
.senha {
    height: 28px;
    margin-top: 16px;
}
.senha .line {
    margin: 3px 0 0 7px;
}
.w200 { width: 200px; }
.vertical {
    width: 125px;
    height: 26px;
    margin: 6px 0 0 8px;
    gap: 4px;
}

/* right column */
.estoque {
    height: 97px;
    padding: 5px 0 0 5px;
}
.tree {
    display: flex;
}
.twigs {
    width: 27px;
    padding-left: 7px;
}
.twigs i {
    display: block;
    height: 21px;
    border: solid #a0a0a0;
    border-width: 0 0 1px 1px;
}
.twigs i + i {
    height: 31px;
}
.branch {
    padding-top: 12px;
}
.acoes {
    display: flex;
    width: 409px;
    height: 39px;
    margin-top: 8px;
    padding: 17px 0 0 7px;
}
.w99 { width: 99px; }
.validade {
    height: 81px;
    margin-top: 15px;
}
.validade .line {
    margin: 4px 0 0 5px;
}
.dias {
    margin-left: 6px;
    line-height: 20px;
}
.liberar {
    height: 22px;
    margin: 6px 0 0 91px;
    line-height: 23px;
}
.liberar > span:first-child {
    width: 260px;
}
.lib-dias {
    width: 31px;
    margin-left: 2px;
}
.help {
    width: 23px;
    height: 22px;
}
.cancelar {
    height: 43px;
    margin-top: 7px;
}
.capt {
    width: max-content;
    background-color: #fff;
}
.cancelar .capt {
    margin: -1px 0 0 -1px;
    padding-right: 7px;
}
.cancelar .line {
    margin: 6px 0 0 7px;
}
.w217 { width: 217px; }
.mascaras {
    height: 37px;
    margin-top: 8px;
}
.mascaras .line {
    margin: 2px 0 0 4px;
    line-height: 22px;
}
.m1 { width: 58px; }
.m2 {
    width: 29px;
    margin-left: 6px;
}
.m3 {
    width: 43px;
    margin-left: 5px;
    color: #a0a0a0;
    letter-spacing: -.2px;
}
.campos {
    height: 43px;
    margin-top: 9px;
}
.campos .line {
    margin: 10px 0 0 11px;
}
.w101 { width: 101px; }
.w87 { width: 87px; }
.informar {
    margin-top: 4px;
}
.padrao {
    width: 444px;
    height: 43px;
    margin-top: 10px;
}
.padrao .opt {
    margin: 8px 0 0 13px;
}
.impostos {
    width: 443px;
    height: 71px;
    margin-top: 11px;
}
.impostos .capt {
    margin: -7px 0 0 8px;
    padding-right: 11px;
    letter-spacing: -.12px;
}
.ufs {
    width: 418px;
    padding: 6px 0 0 8px;
}
.uf {
    height: 25px;
    line-height: 20px;
}
.uf span {
    width: 141px;
    color: #a0a0a0;
    letter-spacing: -.14px;
}
.uf .combo {
    width: 236px;
    height: 22px;
    margin-left: 1px;
    border-color: #afafaf;
}
.uf .combo.fora {
    width: 237px;
}
.help.gray {
    width: 20px;
    height: 20px;
    margin-top: 19px;
    border-color: #aaa;
}
.pager {
    position: absolute;
    right: 9px;
    bottom: 5px;
    display: flex;
    gap: 2px;
}
.pager .btn {
    width: 23px;
    height: 18px;
}
.red {
    border-radius: 1px;
    background: linear-gradient(#f03a20, #c81400);
    fill: none;
    stroke: #fff;
    stroke-width: 1.6;
}

/* dialog footer */
.foot {
    display: flex;
    padding: 5px 0 0 2px;
}
.plain {
    flex: none;
    height: 22px;
    margin-top: 2px;
    background-color: #fff;
    line-height: 20px;
}
.find {
    width: 109px;
    padding-left: 3px;
    letter-spacing: -.08px;
}
.fkey {
    width: 37px;
    height: 23px;
    margin: 1px 0 0 1px;
    gap: 5px;
}
.layout-lbl {
    width: 71px;
    margin-left: 6px;
    line-height: 26px;
    letter-spacing: -.1px;
}
.layout-sel {
    display: flex;
    justify-content: space-between;
    width: 128px;
    padding: 0 4px 0 3px;
}
.layout-sel i {
    align-self: center;
    border: 4px solid transparent;
    border-top-color: #000;
    border-bottom: 0;
}
.action {
    width: 86px;
    height: 23px;
    margin: -1px 0 0 8px;
    gap: 5px;
}
.action.ok {
    margin-left: 405px;
}
```
